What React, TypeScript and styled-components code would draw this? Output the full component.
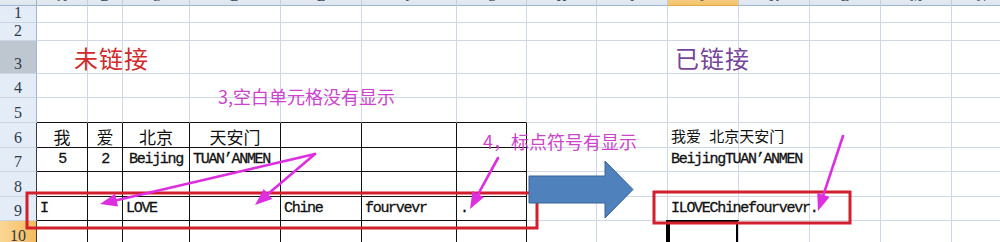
import React from 'react'
import styled, { createGlobalStyle, css } from 'styled-components'

const GlobalStyle = createGlobalStyle`
  html, body {
    margin: 0;
    padding: 0;
    background: #fff;
  }
  body {
    width: 1000px;
    height: 242px;
    overflow: hidden;
  }
`

const COLS = ['A', 'B', 'C', 'D', 'E', 'F', 'G', 'H', 'I', 'J', 'K', 'L', 'M', 'N']
const COL_WIDTHS = [51, 35, 67, 91, 81, 95, 70, 70, 71, 71, 71, 71, 71, 60]
const ROW_HEIGHTS = [17, 18, 33, 24, 25, 25, 24, 25, 24, 25]
const ACTIVE_COL = 9
const ACTIVE_ROW = 10

const GRID = '#d0d7e5'
const HEAD_LINE = '#9eb6ce'
const CJK = '"Noto Sans CJK SC", "Noto Sans", sans-serif'
const MONO = '"Liberation Mono", "DejaVu Sans Mono", monospace'

type Variant = 'title' | 'cjk' | 'small' | 'mono'
type CellData = { text: string; variant: Variant; align?: 'left' | 'center'; color?: string; indent?: number }

const CELLS: Record<string, CellData> = {
  '3-0': { text: '未链接', variant: 'title', color: '#d02a2a', indent: 37 },
  '3-9': { text: '已链接', variant: 'title', color: '#74459a', indent: 7 },
  '6-0': { text: '我', variant: 'cjk', align: 'center' },
  '6-1': { text: '爱', variant: 'cjk', align: 'center' },
  '6-2': { text: '北京', variant: 'cjk', align: 'center' },
  '6-3': { text: '天安门', variant: 'cjk', align: 'center' },
  '6-9': { text: '我爱 北京天安门', variant: 'small' },
  '7-0': { text: '5', variant: 'mono', align: 'center' },
  '7-1': { text: '2', variant: 'mono', align: 'center' },
  '7-2': { text: 'Beijing', variant: 'mono', align: 'center' },
  '7-3': { text: 'TUAN’ANMEN', variant: 'mono' },
  '7-9': { text: 'BeijingTUAN’ANMEN', variant: 'mono' },
  '9-0': { text: 'I', variant: 'mono' },
  '9-2': { text: 'LOVE', variant: 'mono' },
  '9-4': { text: 'Chine', variant: 'mono' },
  '9-5': { text: 'fourvevr', variant: 'mono' },
  '9-6': { text: '.', variant: 'mono' },
  '9-9': { text: 'ILOVEChinefourvevr.', variant: 'mono' },
}

const Page = styled.div`
  position: relative;
  width: 1000px;
  height: 242px;
  overflow: hidden;
  background: #fff;
`

const Sheet = styled.div`
  display: grid;
  grid-template-columns: 37px ${COL_WIDTHS.map((w) => `${w}px`).join(' ')};
  grid-template-rows: 20px ${ROW_HEIGHTS.map((h) => `${h}px`).join(' ')};
  margin-top: -14px;
`

const Corner = styled.div`
  box-sizing: border-box;
  background: linear-gradient(#f4f7fb, #dde5ee);
  border-right: 1px solid ${HEAD_LINE};
  border-bottom: 1px solid ${HEAD_LINE};
`

const ColHeader = styled.div<{ $active?: boolean }>`
  box-sizing: border-box;
  display: flex;
  align-items: flex-end;
  justify-content: center;
  padding-bottom: 1px;
  font-family: 'Liberation Serif', serif;
  font-size: 14px;
  line-height: 14px;
  color: #3b4a5c;
  border-right: 1px solid #c3cfdd;
  border-bottom: 1px solid ${HEAD_LINE};
  background: ${(p) =>
    p.$active ? 'linear-gradient(#fbe3b0, #f4c36a)' : 'linear-gradient(#f4f7fb, #dde5ee)'};
  ${(p) => p.$active && css`border-bottom-color: #e2a848;`}
`

const RowHeader = styled.div<{ $tone: 'plain' | 'dim' | 'active'; $edge?: boolean }>`
  box-sizing: border-box;
  display: flex;
  align-items: flex-end;
  justify-content: center;
  padding-bottom: 1px;
  font-family: 'Liberation Serif', serif;
  font-size: 16px;
  line-height: 16px;
  color: #2e3a46;
  border-bottom: 1px solid #c9d5e3;
  border-right: 1px solid ${(p) => (p.$edge ? '#3a3a3a' : HEAD_LINE)};
  background: ${(p) =>
    p.$tone === 'active' ? 'linear-gradient(90deg, #fbd796, #f3bb5e)' : p.$tone === 'dim' ? '#bec6d0' : '#e4ecf7'};
`

const Cell = styled.div<{ $align: 'left' | 'center'; $right: string; $bottom: string; $selected?: boolean; $indent: number }>`
  box-sizing: border-box;
  display: flex;
  align-items: flex-end;
  justify-content: ${(p) => (p.$align === 'center' ? 'center' : 'flex-start')};
  padding: 0 0 2px ${(p) => (p.$align === 'center' ? 0 : p.$indent)}px;
  border-right: 1px solid ${(p) => p.$right};
  border-bottom: 1px solid ${(p) => p.$bottom};
  white-space: nowrap;
  overflow: visible;
  position: relative;
  ${(p) =>
    p.$selected &&
    css`
      box-shadow: inset 0 0 0 2px #000, -1px 0 0 1px #000;
    `}
`

const CellText = styled.span<{ $variant: Variant; $color?: string }>`
  position: relative;
  z-index: 1;
  color: ${(p) => p.$color || '#111'};
  ${(p) =>
    p.$variant === 'title'
      ? css`
          font-family: ${CJK};
          font-size: 24px;
          line-height: 24px;
          letter-spacing: 1px;
          margin-bottom: 1px;
        `
      : p.$variant === 'cjk'
        ? css`
            font-family: ${CJK};
            font-size: 17px;
            line-height: 17px;
          `
        : p.$variant === 'small'
          ? css`
              font-family: ${CJK};
              font-size: 15px;
              line-height: 16px;
              word-spacing: 5px;
              margin-bottom: 1px;
            `
          : css`
              font-family: ${MONO};
              font-size: 15px;
              line-height: 16px;
              letter-spacing: -1.3px;
              -webkit-text-stroke: 0.3px #111;
              margin-bottom: 1px;
            `}
`

const Overlay = styled.div`
  position: absolute;
  inset: 0;
  pointer-events: none;
  z-index: 2;
`

const Note = styled.div<{ $x: number; $y: number }>`
  position: absolute;
  left: ${(p) => p.$x}px;
  top: ${(p) => p.$y}px;
  font-family: ${CJK};
  font-size: 18px;
  line-height: 20px;
  color: #cc44cc;
  white-space: nowrap;
`

const Drawing = styled.svg`
  position: absolute;
  left: 0;
  top: 0;
`

const MAGENTA = '#dd2ee0'

const Pointer = ({ x1, y1, x2, y2 }: { x1: number; y1: number; x2: number; y2: number }) => {
  const dx = x2 - x1
  const dy = y2 - y1
  const len = Math.hypot(dx, dy)
  const ux = dx / len
  const uy = dy / len
  const head = 17
  const half = 6.5
  const bx = x2 - ux * head
  const by = y2 - uy * head
  const px = -uy
  const py = ux
  const pts = `${x2},${y2} ${bx + px * half},${by + py * half} ${bx - px * half},${by - py * half}`
  return (
    <g>
      <line x1={x1} y1={y1} x2={bx} y2={by} stroke={MAGENTA} strokeWidth={2.6} strokeLinecap="round" />
      <polygon points={pts} fill={MAGENTA} />
    </g>
  )
}

const inTable = (r: number, c: number) => r >= 6 && r <= 10 && c <= 6

export default function App() {
  return (
    <Page>
      <GlobalStyle />
      <Sheet>
        <Corner />
        {COLS.map((name, c) => (
          <ColHeader key={name} $active={c === ACTIVE_COL}>
            {name}
          </ColHeader>
        ))}
        {ROW_HEIGHTS.map((_, i) => {
          const r = i + 1
          return (
            <React.Fragment key={r}>
              <RowHeader $tone={r === ACTIVE_ROW ? 'active' : r === 3 ? 'dim' : 'plain'} $edge={r >= 6}>
                {r}
              </RowHeader>
              {COLS.map((name, c) => {
                const data = CELLS[`${r}-${c}`]
                const right = inTable(r, c) ? '#111' : GRID
                const bottom = inTable(r, c) || (r === 5 && c <= 6) ? '#111' : GRID
                return (
                  <Cell
                    key={name}
                    $align={data?.align ?? 'left'}
                    $indent={data?.indent ?? 3}
                    $right={right}
                    $bottom={bottom}
                    $selected={r === ACTIVE_ROW && c === ACTIVE_COL}
                  >
                    {data && (
                      <CellText $variant={data.variant} $color={data.color}>
                        {data.text}
                      </CellText>
                    )}
                  </Cell>
                )
              })}
            </React.Fragment>
          )
        })}
      </Sheet>
      <Overlay>
        <Drawing width={1000} height={242} viewBox="0 0 1000 242">
          <rect x={27} y={193} width={510} height={35} fill="none" stroke="#d11f2b" strokeWidth={3} />
          <rect x={654} y={192} width={196} height={31} fill="none" stroke="#d11f2b" strokeWidth={3} />
          <polygon
            points="529,176 605,176 605,161 633,189.5 605,218 605,203 529,203"
            fill="#4f81bd"
            stroke="#3a6397"
            strokeWidth={1}
          />
          <Pointer x1={315} y1={154} x2={100} y2={204} />
          <Pointer x1={315} y1={154} x2={255} y2={205} />
          <Pointer x1={498} y1={158} x2={470} y2={209} />
          <Pointer x1={843} y1={136} x2={818} y2={211} />
        </Drawing>
        <Note $x={218} $y={86}>3,空白单元格没有显示</Note>
        <Note $x={483} $y={131}>4，标点符号有显示</Note>
      </Overlay>
    </Page>
  )
}
